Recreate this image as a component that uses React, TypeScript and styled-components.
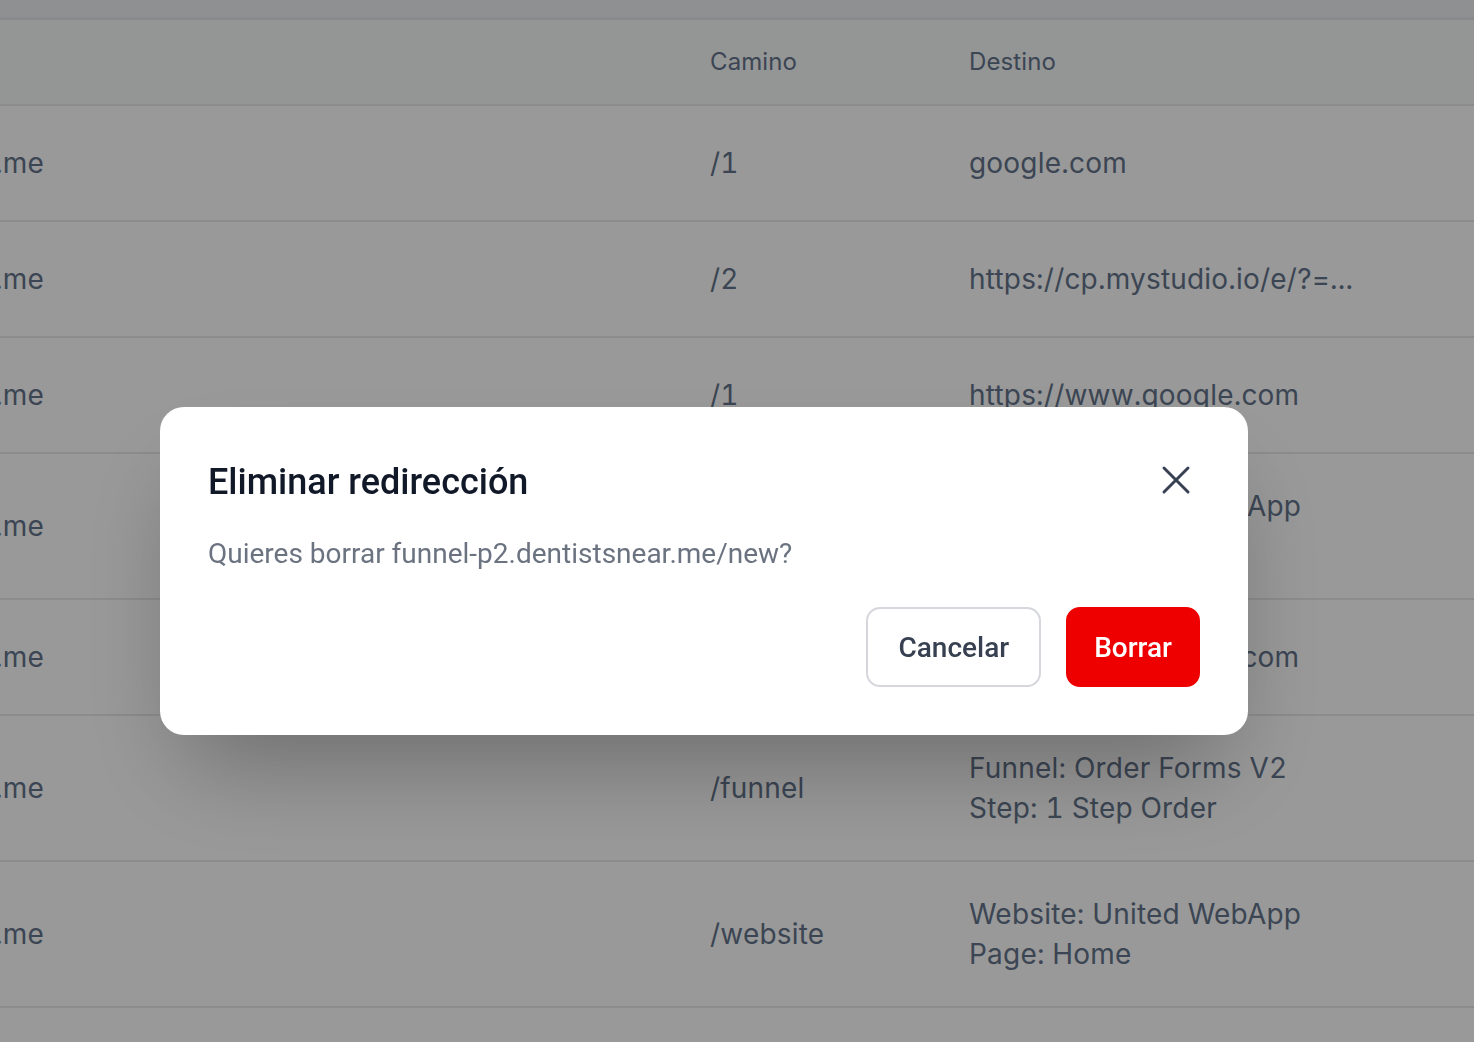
import React from "react";
import styled, { createGlobalStyle } from "styled-components";
import { X } from "lucide-react";

const Global = createGlobalStyle`
  html, body { margin: 0; padding: 0; background: #ffffff; }
  body { font-family: Inter, "Noto Sans", sans-serif; overflow: hidden; }
  * { box-sizing: border-box; }
`;

const Page = styled.div`
  width: 1474px;
  height: 1042px;
  overflow: hidden;
  background: #ffffff;
`;

const TopBand = styled.div`
  height: 20px;
  background: #eff0f2;
  border-bottom: 3px solid #e4e6e9;
`;

const Row = styled.div<{ $head?: boolean }>`
  display: grid;
  grid-template-columns: 710px 259px 1fr;
  align-items: center;
  min-height: ${(p) => (p.$head ? "86px" : "116px")};
  padding: ${(p) => (p.$head ? "0" : "32px 0")};
  border-bottom: 2px solid #e8e9eb;
  background: ${(p) => (p.$head ? "#f7f8f9" : "#ffffff")};
  color: #64748b;
  font-size: ${(p) => (p.$head ? "24px" : "28px")};
  line-height: 40px;
  letter-spacing: ${(p) => (p.$head ? "0.1px" : "0.2px")};
  font-feature-settings: "tnum";
`;

const NameClip = styled.div`
  width: 44px;
  overflow: hidden;
  display: flex;
  justify-content: flex-end;
  white-space: nowrap;
`;

const Cell = styled.div`
  white-space: nowrap;
`;

const Overlay = styled.div`
  position: fixed;
  inset: 0;
  background: rgba(0, 0, 0, 0.4);
  padding: 407px 0 0 160px;
`;

const Modal = styled.div`
  width: 1088px;
  background: #ffffff;
  border-radius: 24px;
  padding: 51px 48px 48px 48px;
  box-shadow: 0 50px 100px -24px rgba(0, 0, 0, 0.3);
  font-family: Roboto, "Noto Sans", sans-serif;
`;

const Header = styled.div`
  display: flex;
  align-items: center;
  justify-content: space-between;
  height: 48px;
`;

const Title = styled.h2`
  margin: 0;
  font-size: 36px;
  font-weight: 500;
  line-height: 48px;
  color: #111827;
`;

const CloseButton = styled.button`
  width: 48px;
  height: 48px;
  margin-top: -5px;
  padding: 0;
  border: none;
  background: transparent;
  color: #374151;
  display: flex;
  align-items: center;
  justify-content: center;
  cursor: pointer;
`;

const Message = styled.p`
  margin: 28px 0 0 0;
  font-size: 28px;
  line-height: 40px;
  color: #6b7280;
`;

const Actions = styled.div`
  display: flex;
  justify-content: flex-end;
  gap: 25px;
  margin-top: 33px;
`;

const Button = styled.button<{ $danger?: boolean }>`
  height: 80px;
  padding: 0 ${(p) => (p.$danger ? "26px" : "30px")};
  border-radius: 14px;
  border: 2px solid ${(p) => (p.$danger ? "#ee0000" : "#d5d7dc")};
  background: ${(p) => (p.$danger ? "#ee0000" : "#ffffff")};
  color: ${(p) => (p.$danger ? "#ffffff" : "#374151")};
  font-family: Roboto, "Noto Sans", sans-serif;
  font-size: 28px;
  font-weight: 500;
  cursor: pointer;
`;

type Redirect = { name: string; path: string; dest: string[] };

const rows: Redirect[] = [
  { name: "funnel.dentistsnear.me", path: "/1", dest: ["google.com"] },
  { name: "funnel.dentistsnear.me", path: "/2", dest: ["https://cp.mystudio.io/e/?=..."] },
  { name: "funnel.dentistsnear.me", path: "/1", dest: ["https://www.google.com"] },
  { name: "funnel-p2.dentistsnear.me", path: "/new", dest: ["Website: United WebApp", "Page: Home"] },
  { name: "funnel.dentistsnear.me", path: "/3", dest: ["https://www.google.com"] },
  { name: "funnel.dentistsnear.me", path: "/funnel", dest: ["Funnel: Order Forms V2", "Step: 1 Step Order"] },
  { name: "funnel.dentistsnear.me", path: "/website", dest: ["Website: United WebApp", "Page: Home"] },
  { name: "funnel.dentistsnear.me", path: "/4", dest: ["google.com"] },
];

export default function App() {
  return (
    <Page>
      <Global />
      <TopBand />
      <Row $head>
        <div />
        <Cell>Camino</Cell>
        <Cell>Destino</Cell>
      </Row>
      {rows.map((r, i) => (
        <Row key={i}>
          <NameClip>
            <span>{r.name}</span>
          </NameClip>
          <Cell>{r.path}</Cell>
          <Cell>
            {r.dest.map((d, j) => (
              <div key={j}>{d}</div>
            ))}
          </Cell>
        </Row>
      ))}
      <Overlay>
        <Modal>
          <Header>
            <Title>Eliminar redirección</Title>
            <CloseButton aria-label="Cerrar">
              <X size={48} strokeWidth={1.5} />
            </CloseButton>
          </Header>
          <Message>Quieres borrar funnel-p2.dentistsnear.me/new?</Message>
          <Actions>
            <Button>Cancelar</Button>
            <Button $danger>Borrar</Button>
          </Actions>
        </Modal>
      </Overlay>
    </Page>
  );
}
